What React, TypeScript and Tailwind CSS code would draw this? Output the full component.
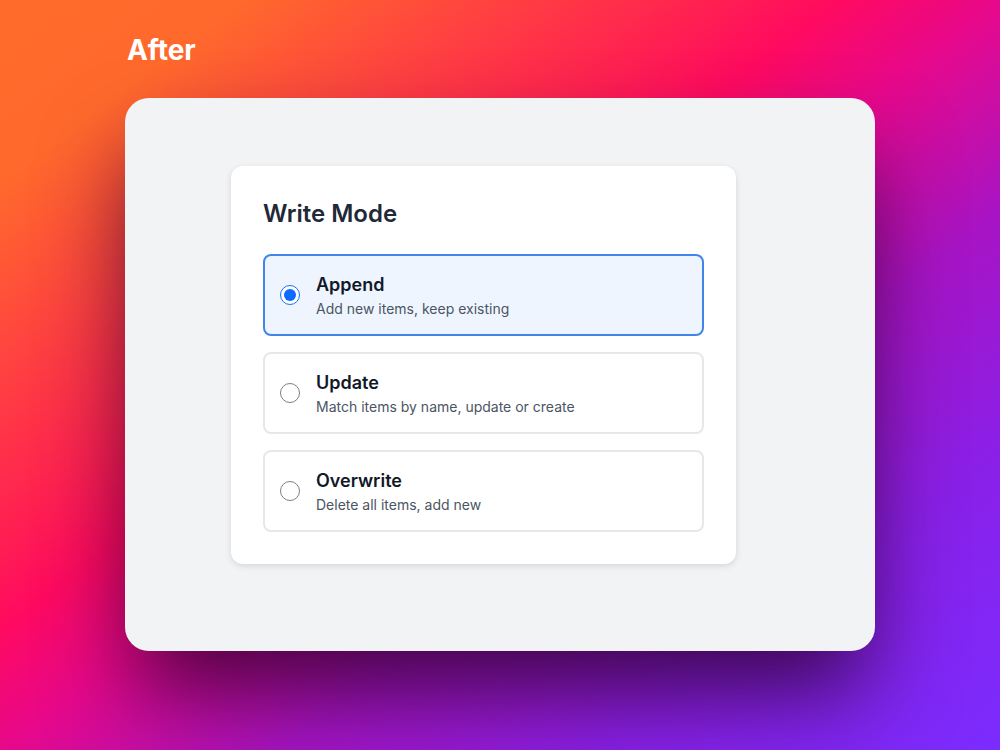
const options = [
  { id: 'append', title: 'Append', description: 'Add new items, keep existing' },
  { id: 'update', title: 'Update', description: 'Match items by name, update or create' },
  { id: 'overwrite', title: 'Overwrite', description: 'Delete all items, add new' },
];

function Radio({ checked }: { checked: boolean }) {
  if (checked) {
    return (
      <span className="flex h-5 w-5 shrink-0 items-center justify-center rounded-full border-[1.5px] border-[#1a6ff5] bg-white">
        <span className="h-3 w-3 rounded-full bg-[#0b6bff]" />
      </span>
    );
  }
  return <span className="h-5 w-5 shrink-0 rounded-full border-[1.5px] border-[#7a7f87] bg-white" />;
}

export default function App() {
  const selected = 'append';
  return (
    <div
      className="flex h-[750px] w-[1000px] flex-col bg-[linear-gradient(to_bottom_right,#ff6b2b_0%,#ff6a2c_12%,#ff4a3c_22%,#ff1f52_36%,#ff0a60_42%,#e8088a_50%,#a814c4_64%,#8a20e8_80%,#7b2cff_100%)] px-[125px] pt-[33px]"
      style={{ fontFamily: 'Inter, "Noto Sans", sans-serif' }}
    >
      <h1 className="ml-[2px] text-[28px] font-bold leading-[34px] text-white">After</h1>
      <div className="mt-[31px] h-[553px] w-[750px] rounded-[24px] bg-[#f2f3f5] pl-[106px] pt-[68px] shadow-[0_50px_90px_-10px_rgba(40,0,40,0.8)]">
        <div className="w-[505px] rounded-xl bg-white p-8 shadow-[0_2px_6px_rgba(0,0,0,0.12)]">
          <h2 className="mb-6 text-2xl font-semibold leading-8 text-[#1f2937]">Write Mode</h2>
          <div className="flex flex-col gap-4">
            {options.map((o) => {
              const on = o.id === selected;
              return (
                <div
                  key={o.id}
                  className={
                    on
                      ? 'flex items-center gap-4 rounded-lg border-2 border-[#4285ea] bg-[#eef5fe] px-[15px] py-[15px]'
                      : 'flex items-center gap-4 rounded-lg border-2 border-[#e6e7ea] bg-white px-[15px] py-[15px]'
                  }
                >
                  <Radio checked={on} />
                  <div className="flex flex-col">
                    <span className="text-lg font-semibold leading-7 text-[#111827]">{o.title}</span>
                    <span className="text-sm leading-5 text-[#4b5563]">{o.description}</span>
                  </div>
                </div>
              );
            })}
          </div>
        </div>
      </div>
    </div>
  );
}
